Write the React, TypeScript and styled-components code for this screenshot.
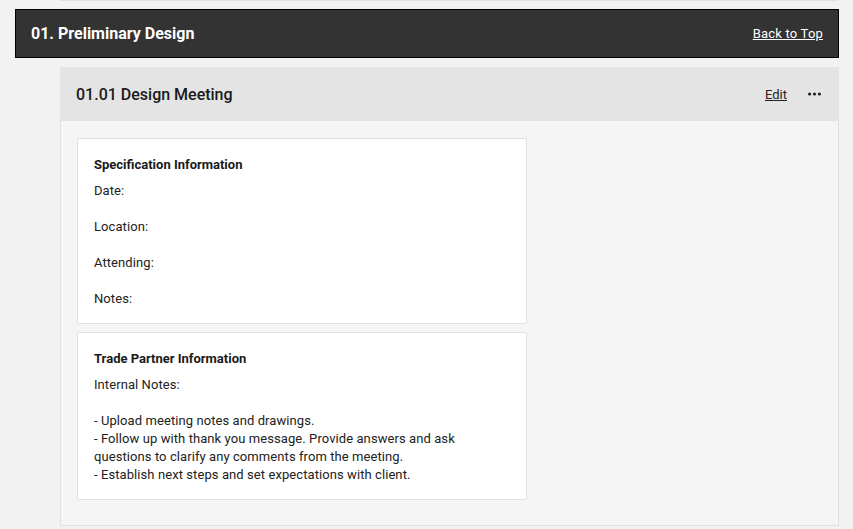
import React from 'react'
import styled, { createGlobalStyle } from 'styled-components'

const GlobalStyle = createGlobalStyle`
  html, body {
    margin: 0;
    padding: 0;
    background: #f2f2f2;
    font-family: Roboto, "Liberation Sans", Arial, sans-serif;
    color: #222;
  }
`

const Page = styled.div`
  width: 853px;
  height: 529px;
  overflow: hidden;
  display: flex;
  flex-direction: column;
`

const PrevPanelEdge = styled.div`
  margin-left: 60px;
  width: 778px;
  height: 1px;
  background: #e2e2e2;
`

const SectionBar = styled.div`
  margin: 8px 0 0 15px;
  height: 47px;
  width: 792px;
  background: #333333;
  border: 1px solid #000;
  display: flex;
  align-items: center;
  justify-content: space-between;
  padding: 0 15px;
`

const SectionTitle = styled.h2`
  margin: 0;
  font-size: 16px;
  font-weight: 700;
  color: #fff;
`

const TopLink = styled.a`
  font-size: 13px;
  letter-spacing: 0.2px;
  color: #fff;
  text-decoration: underline;
  cursor: pointer;
`

const Panel = styled.div`
  margin: 9px 0 0 60px;
  width: 779px;
`

const PanelHeader = styled.div`
  height: 54px;
  background: #e4e4e4;
  display: flex;
  align-items: center;
  padding: 0 18px 0 16px;
`

const PanelTitle = styled.h3`
  margin: 0;
  flex: 1;
  font-size: 16px;
  font-weight: 500;
  color: #1a1a1a;
`

const HeaderActions = styled.div`
  display: flex;
  align-items: center;
  gap: 21px;
`

const EditLink = styled.a`
  font-size: 13px;
  color: #222;
  text-decoration: underline;
  cursor: pointer;
`

const MoreButton = styled.button`
  border: 0;
  background: none;
  padding: 0;
  display: flex;
  cursor: pointer;
`

const PanelBody = styled.div`
  background: #f5f5f5;
  border: 1px solid #e0e0e0;
  border-top: 0;
  padding: 17px 16px 25px;
  display: flex;
  flex-direction: column;
  gap: 8px;
`

const Card = styled.div`
  width: 416px;
  background: #fff;
  border: 1px solid #e0e0e0;
  border-radius: 2px;
  padding: 17px 16px 15px;
`

const CardTitle = styled.h4`
  margin: 0 0 8px;
  font-size: 13px;
  line-height: 18px;
  font-weight: 700;
  color: #1a1a1a;
`

const Field = styled.p`
  margin: 0 0 18px;
  font-size: 13px;
  line-height: 18px;
  letter-spacing: 0.08px;
  color: #222;
  &:last-child {
    margin-bottom: 0;
  }
`

const NoteText = styled.div`
  font-size: 13px;
  line-height: 18px;
  letter-spacing: 0.08px;
  color: #222;
  white-space: pre-line;
`

const Dots = () => (
  <svg width="13" height="4" viewBox="0 0 13 4">
    <circle cx="1.6" cy="2" r="1.6" fill="#222" />
    <circle cx="6.5" cy="2" r="1.6" fill="#222" />
    <circle cx="11.4" cy="2" r="1.6" fill="#222" />
  </svg>
)

const fields = ['Date:', 'Location:', 'Attending:', 'Notes:']

const notes = `Internal Notes:

- Upload meeting notes and drawings.
- Follow up with thank you message. Provide answers and ask questions to clarify any comments from the meeting.
- Establish next steps and set expectations with client.`

export default function App() {
  return (
    <Page>
      <GlobalStyle />
      <PrevPanelEdge />
      <SectionBar>
        <SectionTitle>01. Preliminary Design</SectionTitle>
        <TopLink>Back to Top</TopLink>
      </SectionBar>
      <Panel>
        <PanelHeader>
          <PanelTitle>01.01 Design Meeting</PanelTitle>
          <HeaderActions>
            <EditLink>Edit</EditLink>
            <MoreButton aria-label="More">
              <Dots />
            </MoreButton>
          </HeaderActions>
        </PanelHeader>
        <PanelBody>
          <Card>
            <CardTitle>Specification Information</CardTitle>
            {fields.map((f) => (
              <Field key={f}>{f}</Field>
            ))}
          </Card>
          <Card>
            <CardTitle>Trade Partner Information</CardTitle>
            <NoteText>{notes}</NoteText>
          </Card>
        </PanelBody>
      </Panel>
    </Page>
  )
}
